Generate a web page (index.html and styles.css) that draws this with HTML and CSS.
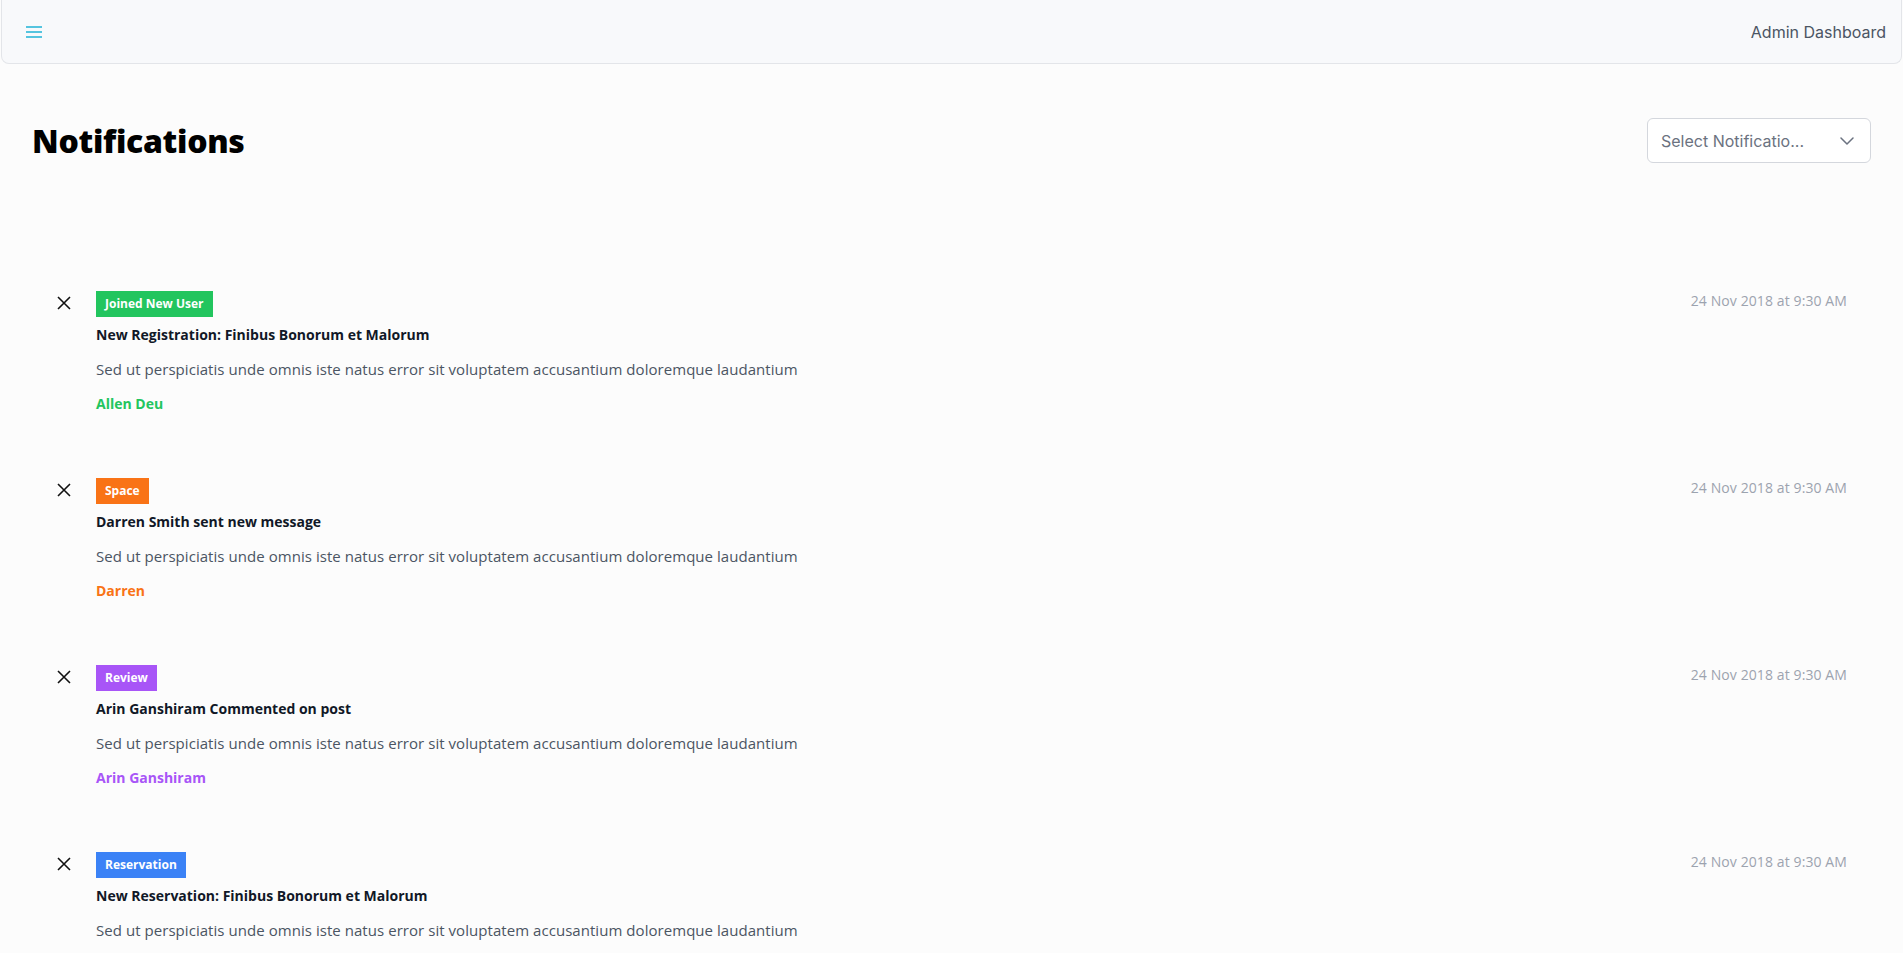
FILE: index.html
```html
<!DOCTYPE html>
<html lang="en">
<head>
<meta charset="utf-8">
<title>Notifications</title>
<link rel="stylesheet" href="styles.css">
</head>
<body>
<header class="topbar">
  <button class="menu-btn" aria-label="Menu">
    <svg width="16" height="12" viewBox="0 0 16 12"><path d="M0 1h16M0 6h16M0 11h16" stroke="#1fb2d6" stroke-width="1.6" fill="none"/></svg>
  </button>
  <span class="brand">Admin Dashboard</span>
</header>
<main class="page">
  <div class="page-head">
    <h1 class="page-title">Notifications</h1>
    <div class="select">
      <span class="select-text">Select Notificatio...</span>
      <svg class="chev" width="14" height="8" viewBox="0 0 14 8"><path d="M1 1l6 6 6-6" stroke="#6b7280" stroke-width="1.5" fill="none" stroke-linecap="round" stroke-linejoin="round"/></svg>
    </div>
  </div>
  <ul class="list">
    <li class="item">
      <svg class="close" width="14" height="14" viewBox="0 0 14 14"><path d="M1 1l12 12M13 1L1 13" stroke="#111" stroke-width="1.6"/></svg>
      <div class="body">
        <span class="badge green">Joined New User</span>
        <h3 class="title">New Registration: Finibus Bonorum et Malorum</h3>
        <p class="desc">Sed ut perspiciatis unde omnis iste natus error sit voluptatem accusantium doloremque laudantium</p>
        <a class="who t-green">Allen Deu</a>
      </div>
      <span class="date">24 Nov 2018 at 9:30 AM</span>
    </li>
    <li class="item">
      <svg class="close" width="14" height="14" viewBox="0 0 14 14"><path d="M1 1l12 12M13 1L1 13" stroke="#111" stroke-width="1.6"/></svg>
      <div class="body">
        <span class="badge orange">Space</span>
        <h3 class="title">Darren Smith sent new message</h3>
        <p class="desc">Sed ut perspiciatis unde omnis iste natus error sit voluptatem accusantium doloremque laudantium</p>
        <a class="who t-orange">Darren</a>
      </div>
      <span class="date">24 Nov 2018 at 9:30 AM</span>
    </li>
    <li class="item">
      <svg class="close" width="14" height="14" viewBox="0 0 14 14"><path d="M1 1l12 12M13 1L1 13" stroke="#111" stroke-width="1.6"/></svg>
      <div class="body">
        <span class="badge purple">Review</span>
        <h3 class="title">Arin Ganshiram Commented on post</h3>
        <p class="desc">Sed ut perspiciatis unde omnis iste natus error sit voluptatem accusantium doloremque laudantium</p>
        <a class="who t-purple">Arin Ganshiram</a>
      </div>
      <span class="date">24 Nov 2018 at 9:30 AM</span>
    </li>
    <li class="item">
      <svg class="close" width="14" height="14" viewBox="0 0 14 14"><path d="M1 1l12 12M13 1L1 13" stroke="#111" stroke-width="1.6"/></svg>
      <div class="body">
        <span class="badge blue">Reservation</span>
        <h3 class="title">New Reservation: Finibus Bonorum et Malorum</h3>
        <p class="desc">Sed ut perspiciatis unde omnis iste natus error sit voluptatem accusantium doloremque laudantium</p>
      </div>
      <span class="date">24 Nov 2018 at 9:30 AM</span>
    </li>
  </ul>
</main>
</body>
</html>
```
FILE: styles.css
```css
* { box-sizing: border-box; }
html, body { margin: 0; padding: 0; }
body {
  background: #fcfcfc;
  font-family: "Open Sans", "Noto Sans", sans-serif;
  color: #111827;
}
.topbar {
  height: 64px;
  margin: 0 1px;
  display: flex;
  align-items: center;
  justify-content: space-between;
  padding: 0 15px 0 24px;
  background: #f8f9fb;
  border: 1px solid #e3e5e9;
  border-top: none;
  border-radius: 0 0 8px 8px;
}
.menu-btn {
  background: none;
  border: none;
  padding: 0;
  display: flex;
  cursor: pointer;
}
.brand {
  font-family: Inter, "Open Sans", sans-serif;
  font-size: 16px;
  color: #4b5563;
}
.page { padding: 0 32px; }
.page-head {
  display: flex;
  justify-content: space-between;
  align-items: center;
  padding-top: 54px;
}
.page-title {
  margin: 0;
  font-size: 32px;
  font-weight: 800;
  color: #000;
  letter-spacing: -0.3px;
}
.select {
  width: 224px;
  height: 45px;
  border: 1px solid #d4d7dd;
  border-radius: 6px;
  background: #fff;
  display: flex;
  align-items: center;
  justify-content: space-between;
  padding: 0 16px 0 13px;
}
.select-text {
  font-family: Inter, "Open Sans", sans-serif;
  font-size: 16px;
  color: #6b7280;
}
.list {
  list-style: none;
  margin: 128px 0 0;
  padding: 0;
}
.item {
  display: flex;
  align-items: flex-start;
  padding: 0 24px 0 25px;
  height: 187px;
}
.close { flex: none; margin-top: 5px; margin-right: 25px; }
.body { flex: 1; display: flex; flex-direction: column; align-items: flex-start; }
.badge {
  display: inline-block;
  height: 26px;
  line-height: 26px;
  padding: 0 9px;
  color: #fff;
  font-size: 12px;
  font-weight: 700;
}
.green { background: #22c55e; }
.orange { background: #f97316; }
.purple { background: #a855f7; }
.blue { background: #3b82f6; }
.title {
  margin: 8px 0 0;
  font-size: 14px;
  font-weight: 700;
  line-height: 20px;
  color: #111827;
}
.desc {
  margin: 14px 0 0;
  font-size: 15px;
  letter-spacing: 0.05px;
  line-height: 20px;
  color: #4b5563;
}
.who {
  margin-top: 15px;
  font-size: 14px;
  line-height: 20px;
  font-weight: 700;
}
.t-green { color: #22c55e; }
.t-orange { color: #f97316; }
.t-purple { color: #a855f7; }
.t-blue { color: #3b82f6; }
.date {
  flex: none;
  font-size: 14px;
  letter-spacing: 0.1px;
  color: #9ca3af;
  line-height: 20px;
  margin-top: 0;
}
```
